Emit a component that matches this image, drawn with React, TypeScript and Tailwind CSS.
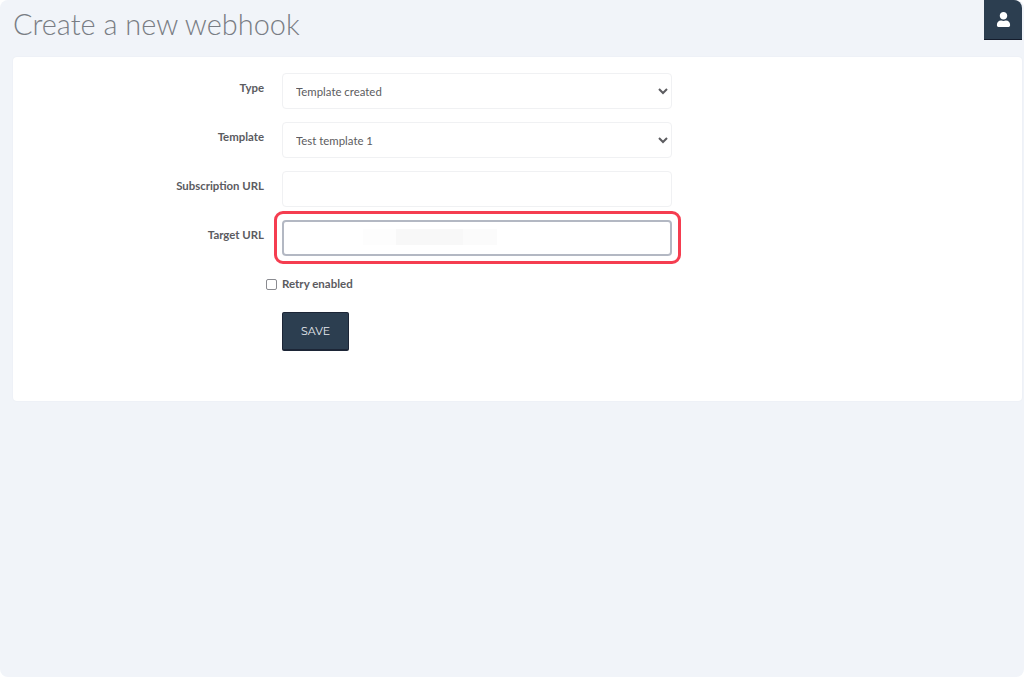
import { FaUser } from "react-icons/fa";

const labelClass = "w-[251px] shrink-0 text-right text-[11.4px] font-bold leading-[16px] text-[#5b5b5f] pt-[7px]";
const fieldClass =
  "h-[36px] w-[390px] rounded-[4px] border border-[#f0f1f3] bg-white pl-[9px] text-[11.4px] text-[#5c5c60] outline-none";

function Row({ label, children }: { label: string; children: React.ReactNode }) {
  return (
    <div className="mb-[13px] flex items-start gap-[18px]">
      <div className={labelClass}>{label}</div>
      {children}
    </div>
  );
}

export default function App() {
  return (
    <div className="h-[677px] w-[1024px] overflow-hidden bg-white font-['Lato','Liberation_Sans',sans-serif]">
      <div className="h-full rounded-[8px] bg-[#f1f4f9]">
        {/* Header */}
        <div className="flex h-[57px] items-start justify-between pl-[13px] pr-[2px]">
          <h1 className="pt-[6px] text-[28.9px] font-light leading-[36px] text-[#797d84]">
            Create a new webhook
          </h1>
          <button className="flex h-[40px] w-[38px] items-center justify-center rounded-tr-[8px] border-b border-b-[#141c2c] bg-[#2c3e50] text-white">
            <FaUser size={15} />
          </button>
        </div>

        {/* Form card */}
        <div className="ml-[13px] mr-[2px] h-[344px] rounded-[4px] bg-white pt-[16px] shadow-[0_0_2px_rgba(40,50,80,0.06)]">
          <Row label="Type">
            <select className={fieldClass} defaultValue="Template created">
              <option>Template created</option>
            </select>
          </Row>
          <Row label="Template">
            <select className={fieldClass} defaultValue="Test template 1">
              <option>Test template 1</option>
            </select>
          </Row>
          <Row label="Subscription URL">
            <input className={fieldClass} />
          </Row>
          <Row label="Target URL">
            <div className="relative">
              <input className="block h-[36px] w-[390px] rounded-[4px] border-2 border-[#b3b8c3] bg-white outline-none" />
              {/* Blurred-out url */}
              <div className="pointer-events-none absolute left-[81px] top-[9px] flex h-[16px]">
                <div className="w-[33px] bg-[#fdfdfd]" />
                <div className="w-[67px] bg-[#f8f8f8]" />
                <div className="w-[34px] bg-[#fbfbfb]" />
              </div>
              {/* Highlight */}
              <div className="pointer-events-none absolute -left-[8px] -top-[9px] h-[53px] w-[407px] rounded-[9px] border-[3px] border-[#f53d50]" />
            </div>
          </Row>

          <div className="mt-[20px] flex items-center pl-[253px]">
            <input
              type="checkbox"
              className="m-0 h-[11px] w-[11px] appearance-none rounded-[2px] border border-[#8a8b90] bg-white"
            />
            <span className="ml-[5px] text-[11.5px] font-bold leading-[16px] text-[#5b5b5f]">Retry enabled</span>
          </div>

          <div className="mt-[20px] pl-[269px]">
            <button className="h-[39px] w-[67px] rounded-[2px] border border-b-2 border-[#1c2536] bg-[#2c3e50] font-['Montserrat','Noto_Sans',sans-serif] text-[11px] text-[#e6e9ee]">
              SAVE
            </button>
          </div>
        </div>
      </div>
    </div>
  );
}
